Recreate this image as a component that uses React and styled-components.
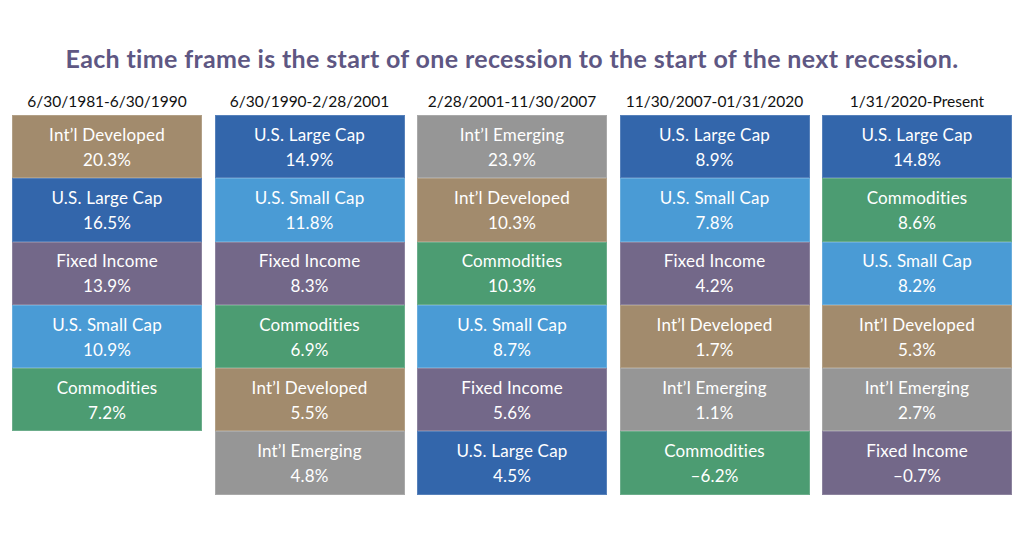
import React from "react";
import styled, { createGlobalStyle } from "styled-components";

const GlobalStyle = createGlobalStyle`
  body {
    margin: 0;
    background: #ffffff;
    font-family: Lato, "Open Sans", sans-serif;
  }
`;

const Page = styled.div`
  width: 1024px;
  height: 534px;
  padding: 40px 12px 0 12px;
  box-sizing: border-box;
`;

const Title = styled.h1`
  margin: 0 0 16px 0;
  text-align: center;
  font-size: 25px;
  line-height: 36px;
  font-weight: 700;
  color: #5e5783;
  letter-spacing: 0.35px;
`;

const Grid = styled.div`
  display: grid;
  grid-template-columns: repeat(5, 190px);
  column-gap: 12.5px;
  align-items: start;
`;

const Column = styled.div`
  display: flex;
  flex-direction: column;
`;

const Period = styled.div`
  text-align: center;
  font-size: 15.5px;
  line-height: 19px;
  margin-bottom: 4px;
  color: #111111;
`;

const Cell = styled.div`
  height: 63.3px;
  box-sizing: border-box;
  display: flex;
  flex-direction: column;
  align-items: center;
  justify-content: center;
  background: ${(p) => p.$bg};
  box-shadow: inset 0 0 0 1px rgba(255, 255, 255, 0.18);
  color: #ffffff;
  font-size: 17px;
  line-height: 25px;
  font-weight: 400;
  letter-spacing: 0.2px;
`;

const colors = {
  dev: "#a28b6d",
  large: "#3366ab",
  small: "#4a9bd5",
  fixed: "#736889",
  comm: "#4c9c72",
  emerg: "#969696",
};

const names = {
  dev: "Int\u2019l Developed",
  large: "U.S. Large Cap",
  small: "U.S. Small Cap",
  fixed: "Fixed Income",
  comm: "Commodities",
  emerg: "Int\u2019l Emerging",
};

const data = [
  {
    period: "6/30/1981-6/30/1990",
    rows: [
      ["dev", "20.3%"],
      ["large", "16.5%"],
      ["fixed", "13.9%"],
      ["small", "10.9%"],
      ["comm", "7.2%"],
    ],
  },
  {
    period: "6/30/1990-2/28/2001",
    rows: [
      ["large", "14.9%"],
      ["small", "11.8%"],
      ["fixed", "8.3%"],
      ["comm", "6.9%"],
      ["dev", "5.5%"],
      ["emerg", "4.8%"],
    ],
  },
  {
    period: "2/28/2001-11/30/2007",
    rows: [
      ["emerg", "23.9%"],
      ["dev", "10.3%"],
      ["comm", "10.3%"],
      ["small", "8.7%"],
      ["fixed", "5.6%"],
      ["large", "4.5%"],
    ],
  },
  {
    period: "11/30/2007-01/31/2020",
    rows: [
      ["large", "8.9%"],
      ["small", "7.8%"],
      ["fixed", "4.2%"],
      ["dev", "1.7%"],
      ["emerg", "1.1%"],
      ["comm", "\u20136.2%"],
    ],
  },
  {
    period: "1/31/2020-Present",
    rows: [
      ["large", "14.8%"],
      ["comm", "8.6%"],
      ["small", "8.2%"],
      ["dev", "5.3%"],
      ["emerg", "2.7%"],
      ["fixed", "\u20130.7%"],
    ],
  },
];

export default function App() {
  return (
    <Page>
      <GlobalStyle />
      <Title>
        Each time frame is the start of one recession to the start of the next
        recession.
      </Title>
      <Grid>
        {data.map((col) => (
          <Column key={col.period}>
            <Period>{col.period}</Period>
            {col.rows.map(([k, v]) => (
              <Cell key={k} $bg={colors[k]}>
                <span>{names[k]}</span>
                <span>{v}</span>
              </Cell>
            ))}
          </Column>
        ))}
      </Grid>
    </Page>
  );
}
